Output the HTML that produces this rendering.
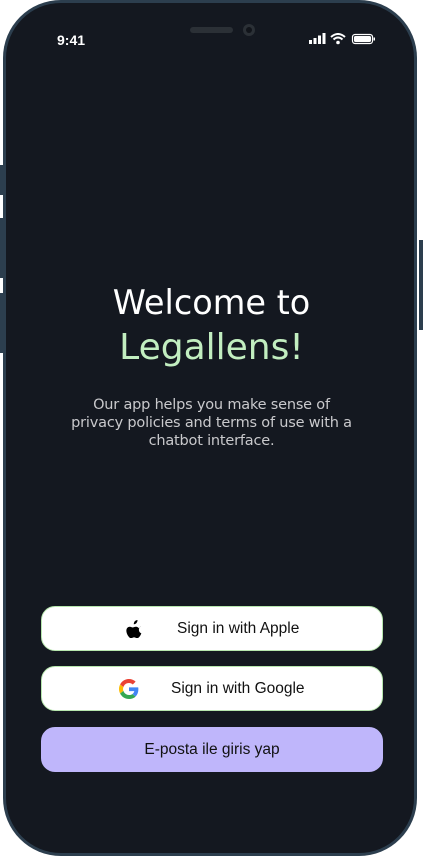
<!DOCTYPE html>
<html><head><meta charset="utf-8"><style>
html,body{margin:0;padding:0;background:#fff;}
body{width:423px;height:858px;position:relative;overflow:hidden;font-family:"DejaVu Sans",sans-serif;}
.frame{position:absolute;left:3px;top:0;width:414px;height:856px;border-radius:58px;background:#2c3e4e;}
.screen{position:absolute;left:6px;top:3px;width:408px;height:850px;border-radius:55px;background:#141820;}
.btnside{position:absolute;background:#2c3e4e;}
.t{position:absolute;left:0;width:423px;text-align:center;}
.b{position:absolute;left:41px;width:342px;height:45px;border-radius:14px;background:#fff;border:1px solid #b7e6ae;box-sizing:border-box;font-family:"Liberation Sans",sans-serif;font-size:15.5px;color:#111;display:flex;align-items:center;justify-content:center;}
</style></head><body>
<div class="btnside" style="left:0;top:165px;width:4px;height:30px"></div>
<div class="btnside" style="left:0;top:218px;width:4px;height:60px"></div>
<div class="btnside" style="left:0;top:293px;width:4px;height:60px"></div>
<div class="btnside" style="left:419px;top:240px;width:4px;height:90px"></div>
<div class="frame"></div>
<div class="screen"></div>
<div style="position:absolute;left:190px;top:27px;width:43px;height:6px;border-radius:3px;background:#2b3036"></div>
<div style="position:absolute;left:243px;top:24px;width:12px;height:12px;border-radius:6px;background:#2b3036"><div style="margin:3px;width:6px;height:6px;border-radius:3px;background:#11141a"></div></div>
<div style="position:absolute;left:57px;top:32px;color:#fff;font-family:'Liberation Sans',sans-serif;font-weight:bold;font-size:14px">9:41</div>
<svg style="position:absolute;left:309px;top:33px" width="68" height="12">
<rect x="0" y="7" width="3" height="4" fill="#fff"/><rect x="4.5" y="5" width="3" height="6" fill="#fff"/><rect x="9" y="2.5" width="3" height="8.5" fill="#fff"/><rect x="13.5" y="0" width="3" height="11" fill="#fff"/>
<path d="M22 4 Q29 -2 36 4" stroke="#fff" stroke-width="2" fill="none"/><path d="M24.5 6.5 Q29 2.5 33.5 6.5" stroke="#fff" stroke-width="2" fill="none"/><circle cx="29" cy="9.5" r="1.8" fill="#fff"/>
<rect x="43.5" y="1.5" width="20" height="9" rx="2.5" stroke="#fff" stroke-width="1.2" fill="none"/><rect x="45" y="3" width="17" height="6" rx="1.5" fill="#fff"/><rect x="64.5" y="4.5" width="1.5" height="3" fill="#fff"/>
</svg>
<div class="t" style="top:283px;font-size:33.5px;color:#fff">Welcome to</div>
<div class="t" style="top:327px;font-size:36px;color:#c2eec0">Legallens!</div>
<div class="t" style="top:396px;font-size:14.5px;line-height:18px;color:#c9c9cc;letter-spacing:-0.2px">Our app helps you make sense of<br>privacy policies and terms of use with a<br>chatbot interface.</div>
<div class="b" style="top:606px"><svg style="position:absolute;left:84px;top:13px" width="16" height="18" viewBox="0 0 16 18"><path d="M11.5 0c.1 1.2-.4 2.3-1 3-.7.8-1.7 1.3-2.7 1.2-.1-1.1.4-2.3 1-3C9.5.5 10.6 0 11.5 0zM14.9 6.3c-.2.1-2 1.2-2 3.5 0 2.7 2.4 3.6 2.4 3.6s-.4 1.3-1.3 2.6c-.8 1.1-1.6 2.2-2.9 2.2-1.2 0-1.6-.8-3-.8s-1.9.8-3 .8c-1.3 0-2.2-1.2-3-2.3C.6 13.6-.3 10.5.9 8.4c.6-1 1.7-1.7 2.9-1.7 1.1 0 2.2.8 2.9.8.7 0 1.9-.9 3.3-.8.5 0 2 .2 2.9 1.6z" fill="#000"/></svg><span style="position:absolute;left:135px">Sign in with Apple</span></div>
<div class="b" style="top:666px"><svg style="position:absolute;left:77px;top:12px" width="20" height="20" viewBox="0 0 48 48"><path fill="#EA4335" d="M24 9.5c3.5 0 6.6 1.2 9.1 3.6l6.8-6.8C35.8 2.4 30.3 0 24 0 14.6 0 6.6 5.4 2.7 13.2l7.9 6.2C12.5 13.6 17.8 9.5 24 9.5z"/><path fill="#4285F4" d="M46.5 24.5c0-1.6-.1-3.1-.4-4.5H24v9h12.7c-.6 2.9-2.2 5.4-4.7 7.1l7.7 6c4.5-4.2 6.8-10.4 6.8-17.6z"/><path fill="#FBBC05" d="M10.5 28.6c-.5-1.4-.8-3-.8-4.6s.3-3.2.8-4.6l-7.9-6.2C1 16.5 0 20.1 0 24s1 7.5 2.7 10.8l7.8-6.2z"/><path fill="#34A853" d="M24 48c6.5 0 11.9-2.1 15.9-5.8l-7.7-6c-2.2 1.5-5 2.3-8.2 2.3-6.2 0-11.5-4.2-13.4-9.9l-7.9 6.2C6.6 42.6 14.6 48 24 48z"/></svg><span style="position:absolute;left:129px">Sign in with Google</span></div>
<div class="b" style="top:727px;background:#bfb6fb;border-color:#bfb6fb">E-posta ile giris yap</div>
</body></html>
